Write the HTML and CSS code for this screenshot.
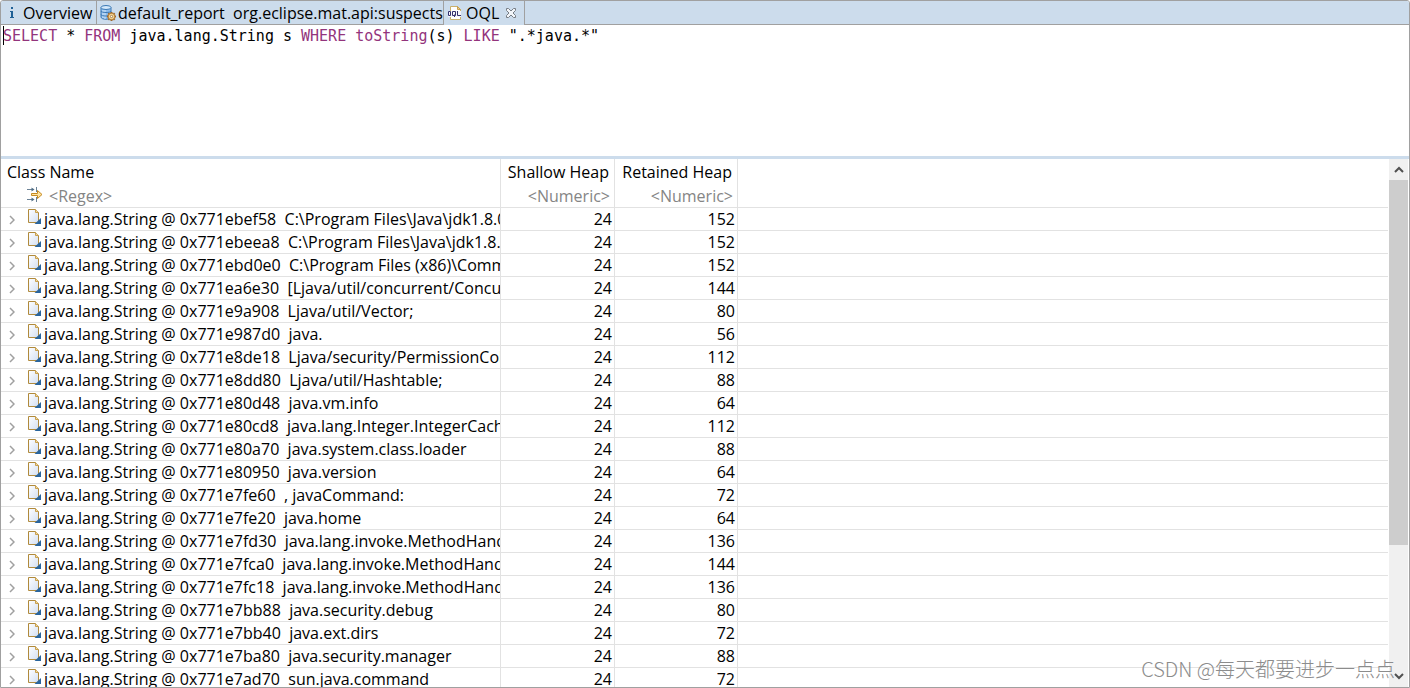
FILE: index.html
```html
<!DOCTYPE html>
<html lang="en">
<head>
<meta charset="utf-8">
<title>OQL</title>
<link rel="stylesheet" href="styles.css">
</head>
<body>
<svg class="defs" aria-hidden="true">
  <linearGradient id="paper" x1="0" y1="0" x2="1" y2="1"><stop offset="0" stop-color="#ffffff"/><stop offset="1" stop-color="#d3dff2"/></linearGradient>
  <symbol id="object" viewBox="0 0 14 16"><path d="M.5.5h7l3 3v10H.5z" fill="url(#paper)" stroke="#b08a3c"/><path d="M7.500.5v3h3" fill="#f3dca0" stroke="#c9a050"/><path d="M13 9v6H6.500z" fill="#2a659d"/></symbol>
  <symbol id="chevron" viewBox="0 0 6 10"><path d="M1 1l4 4-4 4" fill="none" stroke="#a0a0a0" stroke-width="1.500"/></symbol>
</svg>
<main class="window">
  <nav class="tabs" role="tablist">
    <button class="tab tab-overview" role="tab"><svg class="icon-info" viewBox="0 0 6 12"><path d="M2 0h2v2H2zM1 4h3v6h1v1H1v-1h1V5H1z" fill="#1f6096"/></svg>Overview</button>
    <button class="tab tab-report" role="tab"><svg class="icon-report" viewBox="0 0 16 16"><path d="M1 2.500v9.500c0 3 10 3 10 0V2.500z" fill="#8dbbea" stroke="#3a78b5"/><path d="M3 5v8M5 5v9" stroke="#d5e9fb"/><path d="M1 6c0 2 10 2 10 0M1 9.500c0 2 10 2 10 0" fill="none" stroke="#3a78b5"/><ellipse cx="6" cy="2.500" rx="5" ry="2" fill="#d5e9fb" stroke="#3a78b5"/><path d="M11.500 7v9M7 11.500h9M8.300 8.300l6.400 6.400M14.700 8.300l-6.400 6.400" stroke="#9a6526" stroke-width="2"/><circle cx="11.500" cy="11.500" r="3.200" fill="#f8df9c" stroke="#b67a35"/><circle cx="11.500" cy="11.500" r="1.200" fill="#fff" stroke="#9a6526" stroke-width=".8"/></svg>default_report  org.eclipse.mat.api:suspects</button>
    <button class="tab tab-oql" role="tab" aria-selected="true"><svg class="icon-oql" viewBox="0 0 14 14"><path d="M2.500.5h7l3 3v10h-10z" fill="#fff" stroke="#c9b06c"/><path d="M9.500.5v3h3z" fill="#ecd38a" stroke="#c9a050"/><path d="M0 5h13v6H0z" fill="#f5f5fa"/><path d="M.5 5.500h2v4h-2zM4.500 5.500h3v4h-3zM9.500 5v4.500h3.500M6.500 8.500v2.500" fill="none" stroke="#34306e"/></svg>OQL<svg class="icon-close" viewBox="0 0 12 12"><path d="M1.500 1.500h2L6 4l2.500-2.500h2v2L8 6l2.500 2.500v2h-2L6 8l-2.500 2.500h-2v-2L4 6 1.500 3.500z" fill="#f3f6fa" stroke="#777d84"/></svg></button>
  </nav>
  <pre class="editor" contenteditable="true" spellcheck="false" role="textbox" aria-label="OQL query"><b>SELECT</b> * <b>FROM</b> java.lang.String s <b>WHERE</b> <b>toString</b>(s) <b>LIKE</b> ".*java.*"</pre>
  <section class="results">
    <div class="viewport">
    <table class="grid">
      <colgroup><col class="col-name"><col class="col-shallow"><col class="col-retained"><col></colgroup>
      <thead>
        <tr class="titles"><th>Class Name</th><th class="num">Shallow Heap</th><th class="num">Retained Heap</th><th></th></tr>
        <tr class="filters"><td><div class="filter"><svg class="icon-filter" viewBox="0 0 16 15"><path d="M0 2.500h6M0 12.500h6M9.500 0v5M9.500 10v5" fill="none" stroke="#6b8296"/><path d="M4.500.5l3 2-3 2zM4.500 10.500l3 2-3 2z" fill="#4d6b84"/><path d="M4.500 6.500h6v-3l4.500 4-4.500 4v-3h-6z" fill="#ffe4a0" stroke="#c58a22"/></svg>&lt;Regex&gt;</div></td><td class="num">&lt;Numeric&gt;</td><td class="num">&lt;Numeric&gt;</td><td></td></tr>
      </thead>
      <tbody>
        <tr><td><div class="item"><button class="expand" aria-label="Expand"><svg><use href="#chevron"/></svg></button><svg class="object"><use href="#object"/></svg><span>java.lang.String @ 0x771ebef58  C:\Program Files\Java\jdk1.8.0</span></div></td><td class="num">24</td><td class="num">152</td><td></td></tr>
        <tr><td><div class="item"><button class="expand" aria-label="Expand"><svg><use href="#chevron"/></svg></button><svg class="object"><use href="#object"/></svg><span>java.lang.String @ 0x771ebeea8  C:\Program Files\Java\jdk1.8.0</span></div></td><td class="num">24</td><td class="num">152</td><td></td></tr>
        <tr><td><div class="item"><button class="expand" aria-label="Expand"><svg><use href="#chevron"/></svg></button><svg class="object"><use href="#object"/></svg><span>java.lang.String @ 0x771ebd0e0  C:\Program Files (x86)\Comm</span></div></td><td class="num">24</td><td class="num">152</td><td></td></tr>
        <tr><td><div class="item"><button class="expand" aria-label="Expand"><svg><use href="#chevron"/></svg></button><svg class="object"><use href="#object"/></svg><span>java.lang.String @ 0x771ea6e30  [Ljava/util/concurrent/Concurr</span></div></td><td class="num">24</td><td class="num">144</td><td></td></tr>
        <tr><td><div class="item"><button class="expand" aria-label="Expand"><svg><use href="#chevron"/></svg></button><svg class="object"><use href="#object"/></svg><span>java.lang.String @ 0x771e9a908  Ljava/util/Vector;</span></div></td><td class="num">24</td><td class="num">80</td><td></td></tr>
        <tr><td><div class="item"><button class="expand" aria-label="Expand"><svg><use href="#chevron"/></svg></button><svg class="object"><use href="#object"/></svg><span>java.lang.String @ 0x771e987d0  java.</span></div></td><td class="num">24</td><td class="num">56</td><td></td></tr>
        <tr><td><div class="item"><button class="expand" aria-label="Expand"><svg><use href="#chevron"/></svg></button><svg class="object"><use href="#object"/></svg><span>java.lang.String @ 0x771e8de18  Ljava/security/PermissionColle</span></div></td><td class="num">24</td><td class="num">112</td><td></td></tr>
        <tr><td><div class="item"><button class="expand" aria-label="Expand"><svg><use href="#chevron"/></svg></button><svg class="object"><use href="#object"/></svg><span>java.lang.String @ 0x771e8dd80  Ljava/util/Hashtable;</span></div></td><td class="num">24</td><td class="num">88</td><td></td></tr>
        <tr><td><div class="item"><button class="expand" aria-label="Expand"><svg><use href="#chevron"/></svg></button><svg class="object"><use href="#object"/></svg><span>java.lang.String @ 0x771e80d48  java.vm.info</span></div></td><td class="num">24</td><td class="num">64</td><td></td></tr>
        <tr><td><div class="item"><button class="expand" aria-label="Expand"><svg><use href="#chevron"/></svg></button><svg class="object"><use href="#object"/></svg><span>java.lang.String @ 0x771e80cd8  java.lang.Integer.IntegerCache</span></div></td><td class="num">24</td><td class="num">112</td><td></td></tr>
        <tr><td><div class="item"><button class="expand" aria-label="Expand"><svg><use href="#chevron"/></svg></button><svg class="object"><use href="#object"/></svg><span>java.lang.String @ 0x771e80a70  java.system.class.loader</span></div></td><td class="num">24</td><td class="num">88</td><td></td></tr>
        <tr><td><div class="item"><button class="expand" aria-label="Expand"><svg><use href="#chevron"/></svg></button><svg class="object"><use href="#object"/></svg><span>java.lang.String @ 0x771e80950  java.version</span></div></td><td class="num">24</td><td class="num">64</td><td></td></tr>
        <tr><td><div class="item"><button class="expand" aria-label="Expand"><svg><use href="#chevron"/></svg></button><svg class="object"><use href="#object"/></svg><span>java.lang.String @ 0x771e7fe60  , javaCommand:</span></div></td><td class="num">24</td><td class="num">72</td><td></td></tr>
        <tr><td><div class="item"><button class="expand" aria-label="Expand"><svg><use href="#chevron"/></svg></button><svg class="object"><use href="#object"/></svg><span>java.lang.String @ 0x771e7fe20  java.home</span></div></td><td class="num">24</td><td class="num">64</td><td></td></tr>
        <tr><td><div class="item"><button class="expand" aria-label="Expand"><svg><use href="#chevron"/></svg></button><svg class="object"><use href="#object"/></svg><span>java.lang.String @ 0x771e7fd30  java.lang.invoke.MethodHand</span></div></td><td class="num">24</td><td class="num">136</td><td></td></tr>
        <tr><td><div class="item"><button class="expand" aria-label="Expand"><svg><use href="#chevron"/></svg></button><svg class="object"><use href="#object"/></svg><span>java.lang.String @ 0x771e7fca0  java.lang.invoke.MethodHandl</span></div></td><td class="num">24</td><td class="num">144</td><td></td></tr>
        <tr><td><div class="item"><button class="expand" aria-label="Expand"><svg><use href="#chevron"/></svg></button><svg class="object"><use href="#object"/></svg><span>java.lang.String @ 0x771e7fc18  java.lang.invoke.MethodHandl</span></div></td><td class="num">24</td><td class="num">136</td><td></td></tr>
        <tr><td><div class="item"><button class="expand" aria-label="Expand"><svg><use href="#chevron"/></svg></button><svg class="object"><use href="#object"/></svg><span>java.lang.String @ 0x771e7bb88  java.security.debug</span></div></td><td class="num">24</td><td class="num">80</td><td></td></tr>
        <tr><td><div class="item"><button class="expand" aria-label="Expand"><svg><use href="#chevron"/></svg></button><svg class="object"><use href="#object"/></svg><span>java.lang.String @ 0x771e7bb40  java.ext.dirs</span></div></td><td class="num">24</td><td class="num">72</td><td></td></tr>
        <tr><td><div class="item"><button class="expand" aria-label="Expand"><svg><use href="#chevron"/></svg></button><svg class="object"><use href="#object"/></svg><span>java.lang.String @ 0x771e7ba80  java.security.manager</span></div></td><td class="num">24</td><td class="num">88</td><td></td></tr>
        <tr><td><div class="item"><button class="expand" aria-label="Expand"><svg><use href="#chevron"/></svg></button><svg class="object"><use href="#object"/></svg><span>java.lang.String @ 0x771e7ad70  sun.java.command</span></div></td><td class="num">24</td><td class="num">72</td><td></td></tr>
      </tbody>
    </table>
    </div>
    <div class="scrollbar">
      <button aria-label="Scroll up"><svg viewBox="0 0 10 7"><path d="M1 6l4-4 4 4" fill="none" stroke="#505050" stroke-width="2"/></svg></button>
      <div class="track"><div class="thumb"></div></div>
      <button aria-label="Scroll down"><svg viewBox="0 0 10 7"><path d="M1 1l4 4 4-4" fill="none" stroke="#505050" stroke-width="2"/></svg></button>
    </div>
  </section>
  <div class="watermark">CSDN @每天都要进步一点点</div>
</main>
</body>
</html>
```
FILE: styles.css
```css
* { box-sizing: border-box; }
body {
  margin: 0;
  background: #fff;
  color: #000;
  font: 16px/22px "Open Sans", "Noto Sans CJK SC", sans-serif;
}
button {
  margin: 0;
  padding: 0;
  border: 0;
  background: none;
  color: inherit;
  font: inherit;
}
svg { display: block; flex: none; }
.defs { position: absolute; width: 0; height: 0; }
.window {
  position: relative;
  display: flex;
  flex-direction: column;
  height: 100vh;
  overflow: hidden;
  border: 1px solid #a0a0a0;
  border-radius: 3px 3px 0 0;
}
.tabs {
  display: flex;
  flex: none;
  height: 24px;
  background: #ccdcec;
  box-shadow: inset 0 -1px #a0a0a0;
}
.tab {
  display: flex;
  align-items: center;
  border-right: 1px solid #a0a0a0;
  white-space: pre;
}
.tab-overview { width: 96px; padding-left: 8px; gap: 8px; }
.tab-report { width: 347px; padding-left: 3px; gap: 2px; }
.tab-oql { width: 81px; padding-left: 4px; gap: 4px; background: #ccdcec; }
.icon-info { width: 6px; height: 12px; }
.icon-report { width: 16px; height: 16px; }
.icon-oql { width: 14px; height: 14px; }
.icon-close { width: 12px; height: 12px; margin-left: 2px; }
.editor {
  flex: none;
  height: 131px;
  margin: 0;
  padding: 0 2px;
  font: 15px/22px "DejaVu Sans Mono", monospace;
  background: linear-gradient(#000, #000) 2px 1px / 1px 19px no-repeat;
  outline: 0;
}
.editor b { font-weight: 400; color: #93347c; }
.results {
  display: flex;
  flex: 1;
  min-height: 0;
  padding-right: 1px;
  border-top: 3px solid #ccdcec;
}
.viewport { flex: 1; min-width: 0; overflow: hidden; padding-right: 1px; }
.grid {
  width: 100%;
  table-layout: fixed;
  border-collapse: separate;
  border-spacing: 0;
}
.col-name { width: 500px; }
.col-shallow { width: 114px; }
.col-retained { width: 123px; }
.grid th, .grid td {
  padding: 0;
  overflow: hidden;
  white-space: pre;
  font-weight: 400;
  text-align: left;
  border-right: 1px solid #e2e2e2;
}
.grid th:last-child, .grid td:last-child { border-right: 0; }
.grid .num { text-align: right; }
.titles th { height: 26px; padding: 0 6px; }
.titles .num { padding: 0 5px; }
.filters td { height: 23px; color: #858585; border-bottom: 1px solid #e2e2e2; }
.filters .num { padding-right: 4px; }
.filter { display: flex; align-items: center; gap: 6px; padding-left: 26px; height: 22px; }
.icon-filter { width: 16px; height: 15px; margin-bottom: 4px; }
tbody td { height: 23px; border-bottom: 1px solid #e2e2e2; }
tbody .num { padding-right: 2px; }
.item { display: flex; align-items: center; height: 22px; }
.expand { flex: none; width: 27px; padding: 2px 0 0 8px; }
.expand svg { width: 6px; height: 10px; }
.object { width: 14px; height: 16px; margin: 0 2px 4px 0; }
.scrollbar {
  display: flex;
  flex: none;
  flex-direction: column;
  width: 19px;
  background: #f0f0f0;
}
.scrollbar button { display: flex; align-items: center; justify-content: center; height: 21px; }
.scrollbar svg { width: 10px; height: 7px; }
.track { flex: 1; }
.thumb { height: 75%; background: #cdcdcd; }
.watermark {
  position: absolute;
  right: 14px;
  bottom: 4px;
  color: #8c8c8c;
  font: 300 20px/28px "Noto Sans CJK SC", sans-serif;
  pointer-events: none;
}
```
